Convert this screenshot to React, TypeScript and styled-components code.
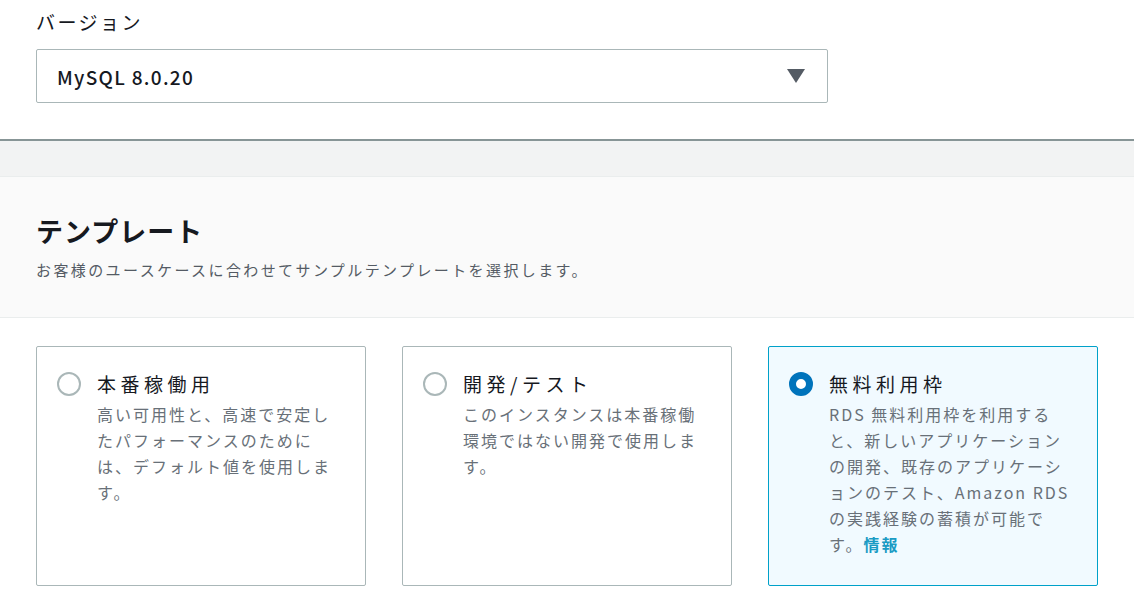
import React from "react";
import styled, { createGlobalStyle } from "styled-components";

const Global = createGlobalStyle`
  html, body { margin: 0; padding: 0; background: #fff; }
  body { font-family: "Noto Sans CJK JP", "Noto Sans", sans-serif; color: #16191f; }
`;

const Page = styled.div`
  width: 1134px; height: 602px; overflow: hidden; display: flex; flex-direction: column;
`;
const Top = styled.div`
  padding: 6px 36px 36px; display: flex; flex-direction: column; gap: 11px;
  border-bottom: 2px solid #879596;
`;
const Label = styled.div` font-size: 19px; line-height: 32px; letter-spacing: 2.5px; `;
const Select = styled.div`
  width: 792px; height: 54px; box-sizing: border-box; border: 1px solid #aab7b8; border-radius: 2px;
  display: flex; align-items: center; justify-content: space-between; padding: 0 22px 0 20px;
  font-size: 19px; letter-spacing: 1.3px; font-weight: 500;
`;
const Band = styled.div` height: 35px; background: #f2f3f3; border-bottom: 1px solid #eaeded; `;
const Header = styled.div`
  background: #fafafa; border-bottom: 1px solid #eaeded; height: 141px; box-sizing: border-box;
  padding: 32px 36px 0;
`;
const H2 = styled.h2` margin: 0; font-size: 27px; font-weight: 700; line-height: 44px; letter-spacing: 1px; `;
const Sub = styled.div` font-size: 15px; color: #545b64; margin-top: 6px; letter-spacing: 2.4px; `;
const Cards = styled.div` display: flex; gap: 36px; padding: 28px 36px 0; `;
const Card = styled.div<{ $sel?: boolean }>`
  width: 332px; height: 240px; box-sizing: border-box; border-radius: 2px;
  border: 1px solid ${p => (p.$sel ? "#00a1c9" : "#aab7b8")};
  background: ${p => (p.$sel ? "#f1faff" : "#fff")};
  display: flex; gap: 16px; padding: 22px 20px 0 20px;
`;
const Radio = styled.div<{ $sel?: boolean }>`
  width: 24px; height: 24px; flex: none; box-sizing: border-box; border-radius: 50%; margin-top: 3px;
  border: ${p => (p.$sel ? "7px solid #0073bb" : "2px solid #aab7b8")}; background: #fff;
`;
const Body = styled.div` width: 244px; `;
const Title = styled.div` font-size: 19px; line-height: 30px; letter-spacing: 4.5px; `;
const Desc = styled.div` font-size: 16px; line-height: 26px; color: #687078; margin-top: 2px; letter-spacing: 2px; `;
const Link = styled.span` color: #1a9bc4; font-weight: 700; `;

export default function App() {
  return (
    <Page>
      <Global />
      <Top>
        <Label>バージョン</Label>
        <Select>
          MySQL 8.0.20
          <svg width="18" height="14" viewBox="0 0 18 14"><path d="M0 0h18L9 14z" fill="#545b64" /></svg>
        </Select>
      </Top>
      <Band />
      <Header>
        <H2>テンプレート</H2>
        <Sub>お客様のユースケースに合わせてサンプルテンプレートを選択します。</Sub>
      </Header>
      <Cards>
        <Card>
          <Radio />
          <Body>
            <Title>本番稼働用</Title>
            <Desc>高い可用性と、高速で安定したパフォーマンスのためには、デフォルト値を使用します。</Desc>
          </Body>
        </Card>
        <Card>
          <Radio />
          <Body>
            <Title>開発/テスト</Title>
            <Desc>このインスタンスは本番稼働環境ではない開発で使用します。</Desc>
          </Body>
        </Card>
        <Card $sel>
          <Radio $sel />
          <Body>
            <Title>無料利用枠</Title>
            <Desc>RDS 無料利用枠を利用すると、新しいアプリケーションの開発、既存のアプリケーションのテスト、Amazon RDS の実践経験の蓄積が可能です。<Link>情報</Link></Desc>
          </Body>
        </Card>
      </Cards>
    </Page>
  );
}
